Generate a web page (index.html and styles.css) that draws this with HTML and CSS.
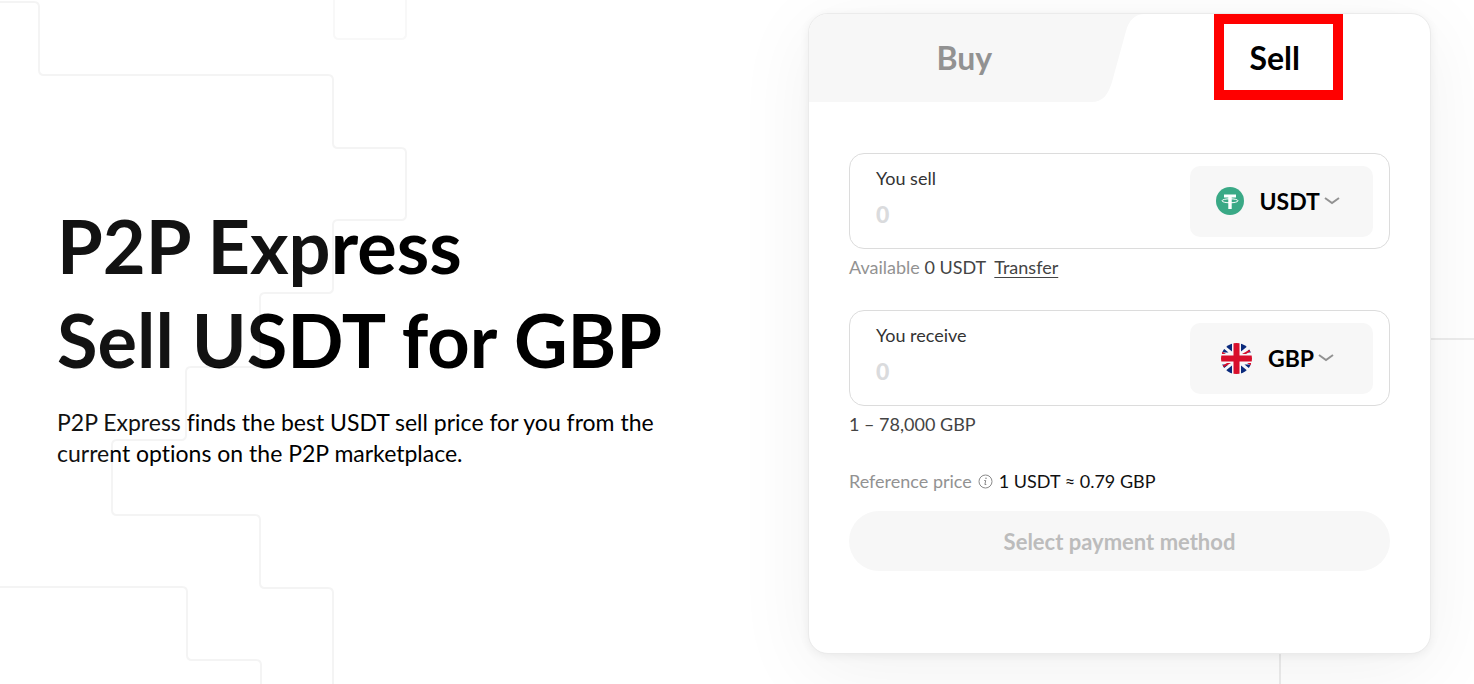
FILE: index.html
```html
<!DOCTYPE html>
<html lang="en">
<head>
<meta charset="utf-8">
<meta name="viewport" content="width=device-width, initial-scale=1">
<title>P2P Express</title>
<link rel="stylesheet" href="styles.css">
</head>
<body>
<main class="page">
  <svg class="grid-lines" width="420" height="700" viewBox="0 0 420 700" aria-hidden="true">
    <path id="steps" class="grid-line" d="M-10 2H34q5 0 5 5V70q0 5 5 5H328q5 0 5 5V143q0 5 5 5H401q5 0 5 5V215q0 5-5 5H338q-5 0-5 5V288q0 5-5 5H265q-5 0-5 5V362q0 5-5 5H191q-5 0-5 5V435q0 5-5 5H117q-5 0-5 5V510q0 5 5 5H255q5 0 5 5V583q0 5 5 5H328q5 0 5 5V710H-10Z"/>
    <path class="grid-line" d="M-10 587H182q5 0 5 5V655q0 5 5 5H256q5 0 5 5V710"/>
    <path class="grid-line grid-line-soft" d="M334-10V34q0 5 5 5H401q5 0 5-5V-10"/>
  </svg>
  <svg class="grid-lines grid-veil" width="420" height="700" viewBox="0 0 420 700" aria-hidden="true">
    <path d="M-10 2H39V75H333V148H406V220H333V293H260V367H186V440H112V515H260V588H333V710H-10Z"/>
  </svg>
  <div class="rule-across"></div>
  <div class="rule-down"></div>

  <section class="intro">
    <h1 class="title">P2P Express<br>Sell USDT for GBP</h1>
    <p class="lead">P2P Express finds the best USDT sell price for you from the current options on the P2P marketplace.</p>
  </section>

  <section class="card">
    <div class="tabs" role="tablist">
      <svg class="tab-shape" width="336" height="88" viewBox="0 0 336 88" aria-hidden="true">
        <path d="M0 0H336C326 0 320 6 317 17L303 68C299 81 294 88 282 88H0Z" fill="#f7f7f7"/>
      </svg>
      <button class="tab" type="button" role="tab" aria-selected="false">Buy</button>
      <button class="tab tab-active" type="button" role="tab" aria-selected="true">Sell<span class="marker"></span></button>
    </div>

    <form class="form">
      <div class="field">
        <div class="entry">
          <label class="label" for="sell">You sell</label>
          <input class="amount" id="sell" type="text" inputmode="decimal" placeholder="0">
        </div>
        <label class="picker">
          <svg width="28" height="28" viewBox="0 0 28 28" aria-hidden="true">
            <circle cx="14" cy="14" r="14" fill="#3aa986"/>
            <path d="M8 7.500H20V10.500H15.700V22H12.300V10.500H8Z" fill="#fff"/>
            <ellipse cx="14" cy="13.800" rx="8" ry="2" fill="none" stroke="#fff" stroke-width="1"/>
            <path d="M12.900 11h2.200v5h-2.200z" fill="#fff"/>
          </svg>
          <select class="currency" aria-label="Currency to sell"><option>USDT</option></select>
          <svg class="chevron" width="16" height="10" viewBox="0 0 16 10" aria-hidden="true"><path d="M1 2l7 5 7-5"/></svg>
        </label>
      </div>
      <p class="hint"><span class="muted">Available</span> 0 USDT <a class="transfer" href="#">Transfer</a></p>

      <div class="field">
        <div class="entry">
          <label class="label" for="receive">You receive</label>
          <input class="amount" id="receive" type="text" inputmode="decimal" placeholder="0">
        </div>
        <label class="picker">
          <svg width="31" height="31" viewBox="0 0 31 31" aria-hidden="true">
            <clipPath id="round"><circle cx="15.500" cy="15.500" r="15.500"/></clipPath>
            <g clip-path="url(#round)">
              <path fill="#f7f7f9" d="M0 0H31V31H0Z"/>
              <path fill="#0a2a7c" d="M3 2L11 8.500V0H3ZM20 0V8.500L28 2V0ZM0 5V9.500H7.500L2 5ZM31 5V9.500H25L29.500 5ZM0 21.500V26H2L7.500 21.500ZM31 21.500V26H29L23.500 21.500ZM11 22.500V31H3V29ZM20 22.500V31H28V29Z"/>
              <path fill="#d80f2c" d="M12.500 0h6v12.500H31v6H18.500V31h-6V18.500H0v-6H12.500ZM0 8L5 11H1ZM21 11L29 6.500 30 8 25 11ZM10 20L2 24.500 1 23 6 20ZM31 23L26 20H30Z"/>
            </g>
          </svg>
          <select class="currency" aria-label="Currency to receive"><option>GBP</option></select>
          <svg class="chevron" width="16" height="10" viewBox="0 0 16 10" aria-hidden="true"><path d="M1 2l7 5 7-5"/></svg>
        </label>
      </div>
      <p class="hint hint-range">1 – 78,000 GBP</p>

      <p class="price"><span class="muted">Reference price</span>
        <svg width="15" height="15" viewBox="0 0 15 15" aria-hidden="true">
          <circle cx="7.500" cy="7.500" r="6.500" fill="none" stroke="#8a8a8a"/>
          <path d="M6.200 6.500h1.500l-.8 4h1.400" fill="none" stroke="#8a8a8a"/>
          <circle cx="8" cy="4.300" r=".8" fill="#8a8a8a"/>
        </svg>
        <span>1 USDT ≈ 0.79 GBP</span></p>
      <button class="submit" type="button" disabled>Select payment method</button>
    </form>
  </section>
</main>
</body>
</html>
```

FILE: styles.css
```css
* { box-sizing: border-box; }
body {
  margin: 0;
  background: #fff;
  color: #000;
  font-family: Lato, "Open Sans", sans-serif;
  font-variant-ligatures: none;
}
h1, p { margin: 0; }
button, input, select { font: inherit; color: inherit; }

.page {
  position: relative;
  display: grid;
  grid-template-columns: minmax(0, 622px) minmax(0, 623px);
  justify-content: space-between;
  align-items: center;
  min-height: 100vh;
  padding: 12px 43px 29px 57px;
  overflow: hidden;
}
.grid-lines {
  position: absolute;
  top: 0;
  left: 0;
  pointer-events: none;
}
.grid-line { fill: none; stroke: #f4f4f4; stroke-width: 2; }
.grid-line-soft { stroke: #f8f8f8; }
.grid-veil { z-index: 1; fill: rgba(255, 255, 255, .07); }
.rule-across, .rule-down { position: absolute; background: #ececec; }
.rule-across { top: 338px; right: 0; width: 43px; height: 2px; }
.rule-down { top: 640px; bottom: 0; right: 193px; width: 2px; }

.intro { position: relative; }
.title { font-size: 74px; line-height: 94px; font-weight: 700; white-space: nowrap; }
.lead { margin-top: 20px; font-size: 23px; line-height: 31px; }

.card {
  position: relative;
  background: #fff;
  border: 1px solid #ebebeb;
  border-radius: 20px;
  box-shadow: 0 16px 80px rgba(0, 0, 0, .06), 0 2px 10px rgba(0, 0, 0, .06);
}
.tabs { position: relative; display: grid; grid-template-columns: 1fr 1fr; height: 88px; }
.tab-shape { position: absolute; top: 0; left: 0; border-top-left-radius: 19px; }
.tab {
  position: relative;
  padding: 0;
  border: 0;
  background: none;
  color: #929292;
  font-size: 32px;
  line-height: 40px;
  font-weight: 700;
}
.tab-active { color: #000; }
.marker {
  position: absolute;
  top: 0;
  left: calc(50% - 61px);
  width: 129px;
  height: 86px;
  border: 10px solid #f00;
}

.form { padding: 51px 40px 82px; }
.field {
  display: flex;
  align-items: center;
  height: 96px;
  padding: 0 16px 0 26px;
  border: 1px solid #dcdcdc;
  border-radius: 15px;
}
.entry { display: flex; flex: 1; flex-direction: column; min-width: 0; padding-bottom: 6px; }
.label { font-size: 18px; line-height: 24px; color: #333; }
.amount {
  width: 100%;
  height: 32px;
  margin-top: 8px;
  padding: 0;
  border: 0;
  outline: 0;
  background: none;
  font-size: 23px;
  font-weight: 900;
}
.amount::placeholder { color: #dadbdd; opacity: 1; }
.picker {
  display: flex;
  align-items: center;
  justify-content: center;
  width: 183px;
  height: 71px;
  padding-right: 8px;
  border-radius: 10px;
  background: #f7f7f7;
}
.currency {
  appearance: none;
  margin-left: 16px;
  padding: 0;
  border: 0;
  background: none;
  font-size: 23px;
  line-height: 30px;
  font-weight: 700;
}
.chevron { margin-left: 3px; fill: none; stroke: #929292; stroke-width: 2; }
.hint { margin: 6px 0 31px; font-size: 18px; line-height: 24px; color: #444; }
.hint-range { margin-bottom: 33px; }
.muted { color: #929292; }
.transfer { margin-left: 4px; color: inherit; text-underline-offset: 3px; }
.price { display: flex; align-items: center; gap: 6px; font-size: 18px; line-height: 24px; color: #111; }
.submit {
  width: 100%;
  height: 60px;
  margin-top: 18px;
  border: 0;
  border-radius: 30px;
  background: #f7f7f7;
  color: #bcbcbc;
  font-size: 22px;
  font-weight: 700;
}
```
